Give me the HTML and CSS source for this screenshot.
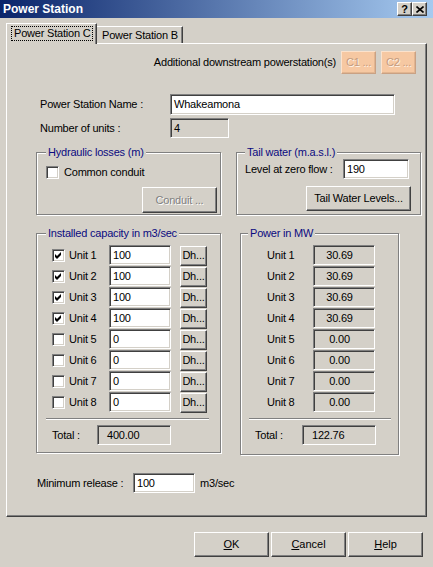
FILE: index.html
```html
<!DOCTYPE html>
<html>
<head>
<meta charset="utf-8">
<title>Power Station</title>
<link rel="stylesheet" href="styles.css">
</head>
<body>
<div class="titlebar">
  <span class="title">Power Station</span>
  <div class="tb-btns">
    <span class="tb-btn tb-help">?</span>
    <span class="tb-btn"><svg width="8" height="7" viewBox="0 0 8 7"><path d="M0.5 0.5 L7.5 6.5 M7.5 0.5 L0.5 6.5" stroke="#000" stroke-width="1.6" fill="none"/></svg></span>
  </div>
</div>

<div class="tabs">
  <div class="tab tab-active"><span class="focus">Power Station C</span></div>
  <div class="tab tab-inactive">Power Station B</div>
</div>

<div class="panel">
  <div class="row-additional">
    <span class="additional-text">Additional downstream powerstation(s)</span>
    <span class="btn btn-peach">C1 ...</span>
    <span class="btn btn-peach">C2 ...</span>
  </div>

  <div class="field-row row-name">
    <span class="label label-main">Power Station Name :</span>
    <span class="input input-name">Whakeamona</span>
  </div>
  <div class="field-row row-units">
    <span class="label label-main">Number of units :</span>
    <span class="input readonly input-units">4</span>
  </div>

  <div class="groups groups-top">
    <div class="group group-hyd">
      <div class="group-title">Hydraulic losses (m)</div>
      <div class="check-row">
        <span class="check"></span>
        <span>Common conduit</span>
      </div>
      <div class="btn-row btn-row-hyd">
        <span class="btn btn-disabled btn-conduit">Conduit ...</span>
      </div>
    </div>
    <div class="group group-tail">
      <div class="group-title">Tail water (m.a.s.l.)</div>
      <div class="tail-row">
        <span class="tail-label">Level at zero flow :</span>
        <span class="input input-tail">190</span>
      </div>
      <div class="btn-row btn-row-tail">
        <span class="btn btn-tail">Tail Water Levels...</span>
      </div>
    </div>
  </div>

  <div class="groups groups-mid">
    <div class="group group-cap">
      <div class="group-title">Installed capacity in m3/sec</div>
      <div class="rows">
        <div class="cap-row"><span class="check"><svg width="9" height="9" viewBox="0 0 9 9"><polygon points="1,3 3,5 7,1 7,4 3,8 1,6" fill="#000"/></svg></span><span class="unit-label">Unit 1</span><span class="input cap-input">100</span><span class="btn btn-dh">Dh...</span></div>
        <div class="cap-row"><span class="check"><svg width="9" height="9" viewBox="0 0 9 9"><polygon points="1,3 3,5 7,1 7,4 3,8 1,6" fill="#000"/></svg></span><span class="unit-label">Unit 2</span><span class="input cap-input">100</span><span class="btn btn-dh">Dh...</span></div>
        <div class="cap-row"><span class="check"><svg width="9" height="9" viewBox="0 0 9 9"><polygon points="1,3 3,5 7,1 7,4 3,8 1,6" fill="#000"/></svg></span><span class="unit-label">Unit 3</span><span class="input cap-input">100</span><span class="btn btn-dh">Dh...</span></div>
        <div class="cap-row"><span class="check"><svg width="9" height="9" viewBox="0 0 9 9"><polygon points="1,3 3,5 7,1 7,4 3,8 1,6" fill="#000"/></svg></span><span class="unit-label">Unit 4</span><span class="input cap-input">100</span><span class="btn btn-dh">Dh...</span></div>
        <div class="cap-row"><span class="check"></span><span class="unit-label">Unit 5</span><span class="input cap-input">0</span><span class="btn btn-dh">Dh...</span></div>
        <div class="cap-row"><span class="check"></span><span class="unit-label">Unit 6</span><span class="input cap-input">0</span><span class="btn btn-dh">Dh...</span></div>
        <div class="cap-row"><span class="check"></span><span class="unit-label">Unit 7</span><span class="input cap-input">0</span><span class="btn btn-dh">Dh...</span></div>
        <div class="cap-row"><span class="check"></span><span class="unit-label">Unit 8</span><span class="input cap-input">0</span><span class="btn btn-dh">Dh...</span></div>
      </div>
      <div class="sep sep-cap"></div>
      <div class="total-row total-cap">
        <span class="total-label">Total :</span>
        <span class="input readonly total-box">400.00</span>
      </div>
    </div>

    <div class="group group-power">
      <div class="group-title">Power in MW</div>
      <div class="rows">
        <div class="pw-row"><span class="pw-label">Unit 1</span><span class="input readonly pw-box">30.69</span></div>
        <div class="pw-row"><span class="pw-label">Unit 2</span><span class="input readonly pw-box">30.69</span></div>
        <div class="pw-row"><span class="pw-label">Unit 3</span><span class="input readonly pw-box">30.69</span></div>
        <div class="pw-row"><span class="pw-label">Unit 4</span><span class="input readonly pw-box">30.69</span></div>
        <div class="pw-row"><span class="pw-label">Unit 5</span><span class="input readonly pw-box">0.00</span></div>
        <div class="pw-row"><span class="pw-label">Unit 6</span><span class="input readonly pw-box">0.00</span></div>
        <div class="pw-row"><span class="pw-label">Unit 7</span><span class="input readonly pw-box">0.00</span></div>
        <div class="pw-row"><span class="pw-label">Unit 8</span><span class="input readonly pw-box">0.00</span></div>
      </div>
      <div class="sep sep-pw"></div>
      <div class="total-row total-pw">
        <span class="total-label total-label-pw">Total :</span>
        <span class="input readonly total-box">122.76</span>
      </div>
    </div>
  </div>

  <div class="min-row">
    <span class="min-label">Minimum release :</span>
    <span class="input input-min">100</span>
    <span class="min-unit">m3/sec</span>
  </div>
</div>

<div class="footer">
  <span class="btn btn-foot"><u>O</u>K</span>
  <span class="btn btn-foot"><u>C</u>ancel</span>
  <span class="btn btn-foot"><u>H</u>elp</span>
</div>
</body>
</html>
```

FILE: styles.css
```css
* { box-sizing: border-box; }
html, body { margin: 0; padding: 0; }
body {
  width: 433px;
  height: 567px;
  overflow: hidden;
  background: #d4d0c8;
  font-family: "Liberation Sans", Arial, sans-serif;
  font-size: 11px;
  line-height: 13px;
  color: #000;
  letter-spacing: -0.2px;
}

/* Title bar */
.titlebar {
  height: 18px;
  display: flex;
  align-items: center;
  justify-content: space-between;
  padding: 0 6px 0 3px;
  background: linear-gradient(to right, #0a246a 0%, #a6caf0 100%);
}
.title { color: #fff; font-weight: bold; font-size: 12px; letter-spacing: 0; }
.tb-btns { display: flex; }
.tb-btn {
  width: 15px;
  height: 14px;
  background: #d4d0c8;
  border: 1px solid;
  border-color: #fff #404040 #404040 #fff;
  box-shadow: inset -1px -1px #808080;
  display: flex;
  align-items: center;
  justify-content: center;
}
.tb-help { font-weight: bold; font-size: 11px; line-height: 11px; letter-spacing: 0; }

/* Tabs */
.tabs {
  height: 25px;
  display: flex;
  align-items: flex-end;
  padding-left: 6px;
}
.tab {
  background: #d4d0c8;
  border-top: 1px solid #fff;
  border-right: 1px solid #404040;
  box-shadow: inset -1px 0 #808080;
}
.tab-active {
  position: relative;
  z-index: 1;
  width: 91px;
  height: 21px;
  margin-bottom: -1px;
  border-left: 1px solid #fff;
  padding: 2px 0 0 4px;
}
.focus {
  display: inline-block;
  border: 1px dotted #000;
  padding: 0 2px;
  height: 15px;
  line-height: 13px;
}
.tab-inactive {
  width: 86px;
  height: 17px;
  padding: 2px 0 0 5px;
}

/* Panel */
.panel {
  margin: 0 6px;
  height: 474px;
  border-top: 1px solid #fff;
  border-left: 1px solid #fff;
  border-right: 1px solid #404040;
  border-bottom: 1px solid #404040;
  box-shadow: inset -1px -1px #808080;
}

/* Generic controls */
.input {
  display: block;
  background: #fff;
  border: 1px solid;
  border-color: #808080 #fff #fff #808080;
  box-shadow: inset 1px 1px #404040, inset -1px -1px #d4d0c8;
  padding: 0 3px;
  height: 20px;
  line-height: 18px;
  white-space: nowrap;
}
.readonly { background: #d4d0c8; }
.btn {
  display: flex;
  align-items: center;
  justify-content: center;
  background: #d4d0c8;
  border: 1px solid;
  border-color: #fff #404040 #404040 #fff;
  box-shadow: inset -1px -1px #808080;
  white-space: nowrap;
}
.btn-disabled { color: #808080; text-shadow: 1px 1px #fff; }

/* Additional row */
.row-additional {
  margin-top: 7px;
  height: 23px;
  display: flex;
  justify-content: flex-end;
  align-items: center;
  padding-right: 10px;
}
.additional-text { margin-right: 5px; }
.btn-peach {
  width: 35px;
  height: 23px;
  background: #f6c8a2;
  border-color: #fbe2cc #c9a184 #c9a184 #fbe2cc;
  box-shadow: inset -1px -1px #e2b590;
  color: #c39c80;
  text-shadow: 1px 1px #fff3e8;
}
.btn-peach + .btn-peach { margin-left: 5px; }

/* Name / units rows */
.field-row {
  display: flex;
  align-items: center;
  padding-left: 33px;
}
.row-name { margin-top: 20px; }
.row-units { margin-top: 3px; }
.label-main { width: 130px; }
.input-name { width: 225px; height: 21px; line-height: 19px; }
.input-units { width: 59px; }

/* Group boxes */
.groups { display: flex; align-items: flex-start; padding-left: 29px; }
.groups-top { margin-top: 14px; }
.groups-mid { margin-top: 18px; }
.group {
  border: 1px solid #808080;
  box-shadow: inset 1px 1px #fff, 1px 1px #fff;
}
.group-title {
  display: table;
  margin: -7px 0 0 9px;
  padding: 0 2px;
  background: #d4d0c8;
  color: #0a0a80;
  height: 13px;
}
.group-hyd { width: 185px; height: 63px; padding-left: 9px; }
.group-hyd .group-title { margin-left: 0; }
.group-tail { width: 185px; height: 63px; margin-left: 15px; padding-left: 8px; }
.group-tail .group-title { margin-left: 0; }
.check-row { display: flex; align-items: center; margin-top: 7px; }
.check {
  width: 13px;
  height: 13px;
  flex: none;
  background: #fff;
  border: 1px solid;
  border-color: #808080 #fff #fff #808080;
  box-shadow: inset 1px 1px #404040, inset -1px -1px #d4d0c8;
  display: flex;
  align-items: center;
  justify-content: center;
  margin-right: 5px;
}
.btn-row { display: flex; justify-content: flex-end; }
.btn-row-hyd { margin-top: 8px; padding-right: 3px; }
.btn-conduit { width: 75px; height: 26px; }
.tail-row { display: flex; align-items: center; }
.tail-label { width: 98px; }
.input-tail { width: 66px; }
.btn-row-tail { margin-top: 7px; padding-right: 9px; }
.btn-tail { width: 105px; height: 25px; }

/* Capacity */
.group-cap { width: 185px; height: 220px; }
.rows { margin-top: 5px; display: flex; flex-direction: column; gap: 1px; }
.cap-row { display: flex; align-items: center; height: 20px; padding-left: 15px; }
.cap-row .check { margin-right: 4px; }
.unit-label { width: 40px; }
.cap-input { width: 62px; }
.btn-dh { width: 27px; height: 20px; margin-left: 9px; margin-top: 1px; }
.sep {
  height: 2px;
  border-top: 1px solid #808080;
  border-bottom: 1px solid #fff;
  margin-top: 6px;
}
.sep-cap { margin-left: 9px; width: 163px; }
.total-row { display: flex; align-items: center; margin-top: 5px; }
.total-cap { padding-left: 15px; }
.total-label { width: 45px; }
.total-box { width: 74px; padding-left: 9px; }

/* Power */
.group-power { width: 159px; height: 222px; margin-left: 19px; }
.group-power .group-title { margin-left: 7px; }
.pw-row { display: flex; align-items: center; height: 20px; padding-left: 26px; }
.pw-label { width: 46px; }
.pw-box { width: 62px; text-align: center; padding: 0 9px 0 0; }
.sep-pw { margin-left: 8px; width: 142px; }
.total-pw { padding-left: 14px; }
.total-label-pw { width: 47px; }

/* Min release */
.min-row { display: flex; align-items: center; margin-top: 18px; padding-left: 30px; }
.min-label { width: 96px; }
.input-min { width: 62px; }
.min-unit { margin-left: 5px; }

/* Footer */
.footer {
  display: flex;
  justify-content: flex-end;
  gap: 2px;
  margin-top: 15px;
  padding-right: 10px;
}
.btn-foot { width: 75px; height: 25px; letter-spacing: 0; }
```
